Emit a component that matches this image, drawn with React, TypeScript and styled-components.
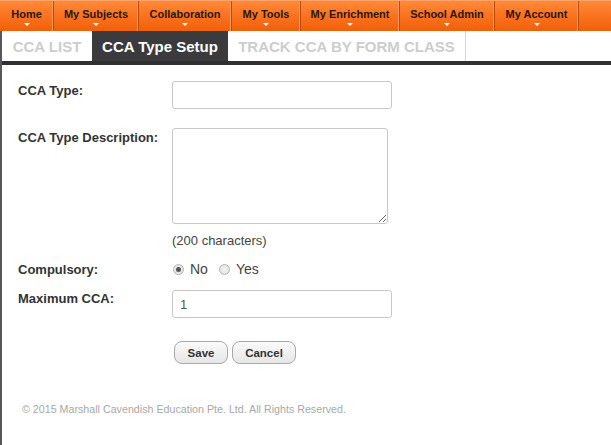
import React from "react";
import styled, { createGlobalStyle } from "styled-components";

const Global = createGlobalStyle`
  html, body { margin: 0; padding: 0; background: #fff; }
  body { font-family: Arial, "Liberation Sans", Helvetica, sans-serif; }
  * { box-sizing: border-box; }
`;

const Page = styled.div`
  width: 611px;
  min-height: 445px;
  display: flex;
  flex-direction: column;
`;

const NavBar = styled.nav`
  display: flex;
  height: 31px;
  background: linear-gradient(#ff8a3a 0%, #fb7421 45%, #f1600b 100%);
  border-top: 1px solid #ffa56a;
`;

const NavItem = styled.div<{ $w: number }>`
  position: relative;
  width: ${(p) => p.$w}px;
  border-right: 1px solid #c14a06;
  box-shadow: inset -1px 0 0 #ff9a5a;
  display: flex;
  justify-content: center;
  padding-top: 7px;
  font-size: 11px;
  font-weight: bold;
  color: #2b1608;
`;

const Caret = styled.span`
  position: absolute;
  left: 50%;
  bottom: 5px;
  margin-left: -3px;
  width: 0;
  height: 0;
  border-left: 3px solid transparent;
  border-right: 3px solid transparent;
  border-top: 3px solid #fff;
`;

const Body = styled.div`
  flex: 1;
  display: flex;
  flex-direction: column;
  border-left: 2px solid #58585a;
`;

const TabRow = styled.div`
  display: flex;
  height: 30px;
  border-bottom: 4px solid #303030;
  box-sizing: content-box;
`;

const Tab = styled.div<{ $active?: boolean; $w: number; $last?: boolean }>`
  width: ${(p) => p.$w}px;
  display: flex;
  align-items: center;
  justify-content: center;
  font-size: 15px;
  font-weight: bold;
  color: ${(p) => (p.$active ? "#fff" : "#cdcdcd")};
  background: ${(p) => (p.$active ? "#3b3b3d" : "#fff")};
  border-right: ${(p) => (p.$last ? "1px solid #d6d6d6" : "none")};
  padding-top: 1px;
`;

const Form = styled.div`
  padding: 16px 0 0 16px;
  display: flex;
  flex-direction: column;
`;

const Row = styled.div<{ $mb: number }>`
  display: flex;
  align-items: flex-start;
  margin-bottom: ${(p) => p.$mb}px;
`;

const Label = styled.div<{ $pt?: number }>`
  width: 154px;
  font-size: 13px;
  font-weight: bold;
  color: #333;
  padding-top: ${(p) => p.$pt ?? 0}px;
`;

const TextInput = styled.input`
  width: 220px;
  height: 28px;
  border: 1px solid #c8c8c8;
  border-radius: 3px;
  padding: 0 7px;
  font-family: Arial, "Liberation Sans", sans-serif;
  font-size: 13px;
  color: #555;
  outline: none;
`;

const TextArea = styled.textarea`
  width: 216px;
  height: 96px;
  border: 1px solid #c8c8c8;
  border-radius: 3px;
  resize: both;
  outline: none;
`;

const Hint = styled.div`
  margin-left: 154px;
  font-size: 13px;
  color: #444;
  margin-bottom: 13px;
`;

const RadioGroup = styled.div`
  display: flex;
  align-items: center;
  font-size: 14px;
  color: #444;
`;

const RadioDot = styled.span<{ $on?: boolean }>`
  width: 11px;
  height: 11px;
  border-radius: 50%;
  border: 1px solid #b5b5b5;
  background: radial-gradient(circle, #f4f4f4, #dcdcdc);
  display: inline-flex;
  align-items: center;
  justify-content: center;
  margin: 0 6px 0 1px;
  &::after {
    content: "";
    width: 5px;
    height: 5px;
    border-radius: 50%;
    background: ${(p) => (p.$on ? "#555" : "transparent")};
  }
`;

const RadioText = styled.span`
  margin-right: 10px;
`;

const Buttons = styled.div`
  margin-left: 156px;
  display: flex;
  gap: 4px;
  margin-top: 5px;
`;

const Button = styled.button<{ $w: number }>`
  width: ${(p) => p.$w}px;
  height: 23px;
  border: 1px solid #a9a9a9;
  border-radius: 8px;
  background: linear-gradient(#fafafa, #e6e6e6);
  font-family: Arial, "Liberation Sans", sans-serif;
  font-size: 11.5px;
  font-weight: bold;
  color: #333;
  padding: 0;
`;

const Footer = styled.div`
  margin: 39px 0 0 20px;
  font-size: 10.7px;
  color: #a8a8a8;
`;

const navItems: [string, number][] = [
  ["Home", 54],
  ["My Subjects", 85],
  ["Collaboration", 93],
  ["My Tools", 69],
  ["My Enrichment", 99],
  ["School Admin", 95],
  ["My Account", 84],
];

export default function App() {
  return (
    <Page>
      <Global />
      <NavBar>
        {navItems.map(([t, w]) => (
          <NavItem key={t} $w={w}>
            {t}
            <Caret />
          </NavItem>
        ))}
      </NavBar>
      <Body>
        <TabRow>
          <Tab $w={90}>CCA LIST</Tab>
          <Tab $w={136} $active>
            CCA Type Setup
          </Tab>
          <Tab $w={238} $last>
            TRACK CCA BY FORM CLASS
          </Tab>
        </TabRow>
        <Form>
          <Row $mb={19}>
            <Label $pt={2}>CCA Type:</Label>
            <TextInput />
          </Row>
          <Row $mb={9}>
            <Label $pt={2}>CCA Type Description:</Label>
            <TextArea />
          </Row>
          <Hint>(200 characters)</Hint>
          <Row $mb={13}>
            <Label $pt={1}>Compulsory:</Label>
            <RadioGroup>
              <RadioDot $on />
              <RadioText>No</RadioText>
              <RadioDot />
              <RadioText>Yes</RadioText>
            </RadioGroup>
          </Row>
          <Row $mb={18}>
            <Label $pt={1}>Maximum CCA:</Label>
            <TextInput defaultValue="1" />
          </Row>
          <Buttons>
            <Button $w={54}>Save</Button>
            <Button $w={64}>Cancel</Button>
          </Buttons>
        </Form>
        <Footer>© 2015 Marshall Cavendish Education Pte. Ltd. All Rights Reserved.</Footer>
      </Body>
    </Page>
  );
}
